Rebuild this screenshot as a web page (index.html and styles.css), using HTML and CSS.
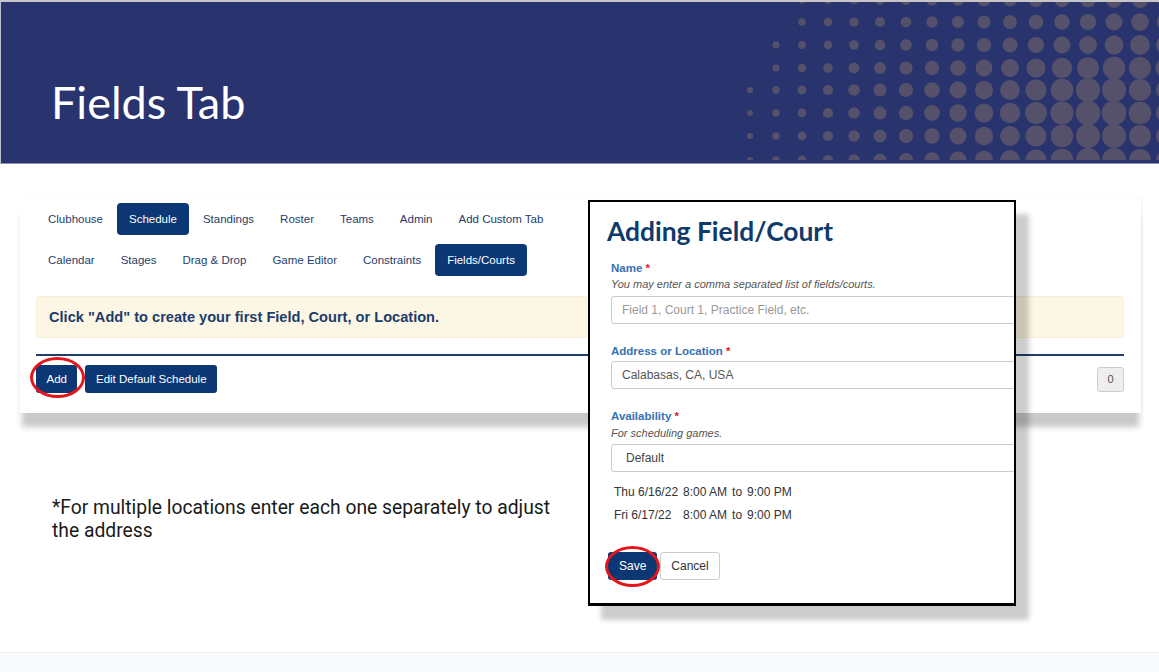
FILE: index.html
```html
<!DOCTYPE html>
<html lang="en">
<head>
<meta charset="utf-8">
<title>Fields Tab</title>
<link rel="stylesheet" href="styles.css">
</head>
<body>
<header class="hero">
  <h1 class="hero-title">Fields Tab</h1>
  <svg class="hero-dots" viewBox="0 0 420 158" width="420" height="158" aria-hidden="true">
    <g fill="#55516b">
      <circle cx="63" cy="-2" r="3.7"/><circle cx="89" cy="-2" r="4"/><circle cx="115" cy="-2" r="4.4"/><circle cx="141" cy="-2" r="4.8"/><circle cx="167" cy="-2" r="5.1"/><circle cx="193" cy="-2" r="5.5"/><circle cx="219" cy="-2" r="5.8"/><circle cx="245" cy="-2" r="6.2"/><circle cx="271" cy="-2" r="6.5"/><circle cx="297" cy="-2" r="6.9"/><circle cx="323" cy="-2" r="7.2"/><circle cx="349" cy="-2" r="7.6"/><circle cx="375" cy="-2" r="7.9"/><circle cx="401" cy="-2" r="8"/><circle cx="427" cy="-2" r="8"/>
      <circle cx="63" cy="20" r="3.8"/><circle cx="89" cy="20" r="4.2"/><circle cx="115" cy="20" r="4.6"/><circle cx="141" cy="20" r="5"/><circle cx="167" cy="20" r="5.3"/><circle cx="193" cy="20" r="5.7"/><circle cx="219" cy="20" r="6.1"/><circle cx="245" cy="20" r="6.5"/><circle cx="271" cy="20" r="6.9"/><circle cx="297" cy="20" r="7.3"/><circle cx="323" cy="20" r="7.7"/><circle cx="349" cy="20" r="8.1"/><circle cx="375" cy="20" r="8.5"/><circle cx="401" cy="20" r="8.8"/><circle cx="427" cy="20" r="9"/>
      <circle cx="37" cy="43" r="3.5"/><circle cx="63" cy="43" r="3.9"/><circle cx="89" cy="43" r="4.4"/><circle cx="115" cy="43" r="4.8"/><circle cx="141" cy="43" r="5.3"/><circle cx="167" cy="43" r="5.8"/><circle cx="193" cy="43" r="6.2"/><circle cx="219" cy="43" r="6.7"/><circle cx="245" cy="43" r="7.1"/><circle cx="271" cy="43" r="7.6"/><circle cx="297" cy="43" r="8.1"/><circle cx="323" cy="43" r="8.5"/><circle cx="349" cy="43" r="9"/><circle cx="375" cy="43" r="9.4"/><circle cx="401" cy="43" r="9.9"/><circle cx="427" cy="43" r="10"/>
      <circle cx="37" cy="66" r="3.6"/><circle cx="63" cy="66" r="4.2"/><circle cx="89" cy="66" r="4.8"/><circle cx="115" cy="66" r="5.4"/><circle cx="141" cy="66" r="6"/><circle cx="167" cy="66" r="6.6"/><circle cx="193" cy="66" r="7.2"/><circle cx="219" cy="66" r="7.8"/><circle cx="245" cy="66" r="8.4"/><circle cx="271" cy="66" r="9"/><circle cx="297" cy="66" r="9.6"/><circle cx="323" cy="66" r="10.2"/><circle cx="349" cy="66" r="10.8"/><circle cx="375" cy="66" r="11.2"/><circle cx="401" cy="66" r="11"/><circle cx="427" cy="66" r="10.5"/>
      <circle cx="11" cy="88" r="3"/><circle cx="37" cy="88" r="3.7"/><circle cx="63" cy="88" r="4.4"/><circle cx="89" cy="88" r="5.1"/><circle cx="115" cy="88" r="5.8"/><circle cx="141" cy="88" r="6.5"/><circle cx="167" cy="88" r="7.1"/><circle cx="193" cy="88" r="7.8"/><circle cx="219" cy="88" r="8.5"/><circle cx="245" cy="88" r="9.2"/><circle cx="271" cy="88" r="9.9"/><circle cx="297" cy="88" r="10.6"/><circle cx="323" cy="88" r="11.3"/><circle cx="349" cy="88" r="12"/><circle cx="375" cy="88" r="12"/><circle cx="401" cy="88" r="11"/><circle cx="427" cy="88" r="10"/>
      <circle cx="11" cy="111" r="3"/><circle cx="37" cy="111" r="3.7"/><circle cx="63" cy="111" r="4.4"/><circle cx="89" cy="111" r="5.1"/><circle cx="115" cy="111" r="5.8"/><circle cx="141" cy="111" r="6.5"/><circle cx="167" cy="111" r="7.2"/><circle cx="193" cy="111" r="7.9"/><circle cx="219" cy="111" r="8.7"/><circle cx="245" cy="111" r="9.4"/><circle cx="271" cy="111" r="10.2"/><circle cx="297" cy="111" r="10.9"/><circle cx="323" cy="111" r="11.6"/><circle cx="349" cy="111" r="12.3"/><circle cx="375" cy="111" r="12.3"/><circle cx="401" cy="111" r="11.3"/><circle cx="427" cy="111" r="10"/>
      <circle cx="11" cy="134" r="3"/><circle cx="37" cy="134" r="3.7"/><circle cx="63" cy="134" r="4.4"/><circle cx="89" cy="134" r="5.1"/><circle cx="115" cy="134" r="5.8"/><circle cx="141" cy="134" r="6.5"/><circle cx="167" cy="134" r="7.1"/><circle cx="193" cy="134" r="7.8"/><circle cx="219" cy="134" r="8.5"/><circle cx="245" cy="134" r="9.2"/><circle cx="271" cy="134" r="9.9"/><circle cx="297" cy="134" r="10.6"/><circle cx="323" cy="134" r="11.3"/><circle cx="349" cy="134" r="12"/><circle cx="375" cy="134" r="12"/><circle cx="401" cy="134" r="11"/><circle cx="427" cy="134" r="10"/>
      <circle cx="11" cy="158" r="3"/><circle cx="37" cy="158" r="3.7"/><circle cx="63" cy="158" r="4.4"/><circle cx="89" cy="158" r="5.1"/><circle cx="115" cy="158" r="5.8"/><circle cx="141" cy="158" r="6.5"/><circle cx="167" cy="158" r="7.1"/><circle cx="193" cy="158" r="7.8"/><circle cx="219" cy="158" r="8.5"/><circle cx="245" cy="158" r="9.2"/><circle cx="271" cy="158" r="9.9"/><circle cx="297" cy="158" r="10.6"/><circle cx="323" cy="158" r="11.3"/><circle cx="349" cy="158" r="12"/><circle cx="375" cy="158" r="12"/><circle cx="401" cy="158" r="11"/><circle cx="427" cy="158" r="10"/>
    </g>
  </svg>
</header>

<main class="stage">
  <section class="card">
    <nav class="tabs">
      <ul class="tab-row">
        <li class="tab">Clubhouse</li>
        <li class="tab active">Schedule</li>
        <li class="tab">Standings</li>
        <li class="tab">Roster</li>
        <li class="tab">Teams</li>
        <li class="tab">Admin</li>
        <li class="tab">Add Custom Tab</li>
      </ul>
      <ul class="tab-row">
        <li class="tab">Calendar</li>
        <li class="tab">Stages</li>
        <li class="tab">Drag &amp; Drop</li>
        <li class="tab">Game Editor</li>
        <li class="tab">Constraints</li>
        <li class="tab active">Fields/Courts</li>
      </ul>
    </nav>
    <div class="alert">Click "Add" to create your first Field, Court, or Location.</div>
    <div class="rule"></div>
    <div class="toolbar">
      <div class="btn-group">
        <span class="mark">
          <span class="btn primary">Add</span>
          <span class="ring ring-add"></span>
        </span>
        <span class="btn primary">Edit Default Schedule</span>
      </div>
      <span class="count">0</span>
    </div>
  </section>

  <p class="note">*For multiple locations enter each one separately to adjust the address</p>

  <div class="dialog">
    <h2 class="dialog-title">Adding Field/Court</h2>
    <div class="group g-name">
      <div class="lbl">Name <span class="req">*</span></div>
      <div class="hint">You may enter a comma separated list of fields/courts.</div>
      <div class="input placeholder">Field 1, Court 1, Practice Field, etc.</div>
    </div>
    <div class="group g-addr">
      <div class="lbl">Address or Location <span class="req">*</span></div>
      <div class="input">Calabasas, CA, USA</div>
    </div>
    <div class="group g-avail">
      <div class="lbl">Availability <span class="req">*</span></div>
      <div class="hint">For scheduling games.</div>
      <div class="input select">Default</div>
    </div>
    <div class="slots">
      <span>Thu 6/16/22</span><span>8:00 AM</span><span>to</span><span>9:00 PM</span>
      <span>Fri 6/17/22</span><span>8:00 AM</span><span>to</span><span>9:00 PM</span>
    </div>
    <div class="actions">
      <span class="mark">
        <span class="btn primary save">Save</span>
        <span class="ring ring-save"></span>
      </span>
      <span class="btn ghost">Cancel</span>
    </div>
  </div>
</main>

<footer class="foot"></footer>
</body>
</html>
```

FILE: styles.css
```css
* { box-sizing: border-box; }

html, body {
  margin: 0;
  padding: 0;
}

body {
  width: 1159px;
  height: 672px;
  display: flex;
  flex-direction: column;
  background: #ffffff;
  font-family: "Liberation Sans", Arial, sans-serif;
  overflow: hidden;
}

/* ---------- header banner ---------- */
.hero {
  flex: 0 0 164px;
  display: flex;
  justify-content: space-between;
  align-items: flex-start;
  background: #29346f;
  border-top: 2px solid #c6c6c9;
  border-left: 1px solid #b9bccb;
  border-bottom: 1px solid #8d93b4;
  overflow: hidden;
}

.hero-title {
  margin: 0;
  padding: 73px 0 0 50px;
  font: 400 45px/54px Lato, sans-serif;
  color: #ffffff;
}

.hero-dots {
  display: block;
  flex: 0 0 420px;
  width: 420px;
  height: 158px;
}

/* ---------- stage ---------- */
.stage {
  flex: 1 1 auto;
  position: relative;
  padding-top: 34px;
}

.card {
  margin: 0 18px 0 20px;
  background: #ffffff;
  padding: 5px 17px 20px 16px;
  box-shadow: 0 16px 6px -2px #c9c9c9, 1px 0 2px rgba(0, 0, 0, 0.06);
}

.tab-row {
  display: flex;
  gap: 2px;
  list-style: none;
  margin: 0;
  padding: 0;
}

.tab-row + .tab-row { margin-top: 9px; }

.tab {
  padding: 9px 12px;
  font-size: 11.5px;
  line-height: 14px;
  color: #1f3d6b;
  border-radius: 4px;
}

.tab.active {
  background: #0b3875;
  color: #ffffff;
}

.alert {
  margin-top: 20px;
  height: 42px;
  display: flex;
  align-items: center;
  padding: 0 12px;
  background: #fcf7e4;
  border: 1px solid #f6eed6;
  border-radius: 4px;
  font: 700 14.6px/16px "Liberation Sans", Arial, sans-serif;
  color: #1d3c6d;
}

.rule {
  margin-top: 16px;
  height: 2px;
  background: #1f3e6c;
}

.toolbar {
  margin-top: 9px;
  display: flex;
  justify-content: space-between;
  align-items: center;
}

.btn-group {
  display: flex;
  gap: 8px;
}

.mark {
  position: relative;
  display: inline-flex;
}

.btn {
  display: inline-flex;
  align-items: center;
  height: 28px;
  padding: 0 10.5px;
  font-size: 11.5px;
  border-radius: 3px;
  white-space: nowrap;
}

.btn.primary {
  background: #0b3875;
  color: #ffffff;
}

.btn.ghost {
  background: #ffffff;
  color: #333333;
  border: 1px solid #cccccc;
  font-size: 12px;
  padding: 0 10px;
}

.btn.save {
  font-size: 12px;
  padding: 0 11px;
}

.ring {
  position: absolute;
  width: 55px;
  height: 41px;
  border: 3px solid #e3161c;
  border-radius: 50%;
  pointer-events: none;
}

.ring-add { left: -6px; top: -8px; }
.ring-save { left: -3px; top: -6px; }

.count {
  width: 27px;
  height: 25px;
  display: flex;
  align-items: center;
  justify-content: center;
  background: #eeeeee;
  border: 1px solid #cccccc;
  border-radius: 3px;
  font-size: 11px;
  color: #555555;
}

.note {
  margin: 83px 0 0 52px;
  width: 515px;
  font: 400 19.3px/23px Roboto, sans-serif;
  color: #1a1a1a;
}

/* ---------- dialog overlay ---------- */
.dialog {
  position: absolute;
  left: 588px;
  top: 36px;
  width: 428px;
  height: 406px;
  background: #ffffff;
  border: 2px solid #000000;
  border-bottom-width: 3px;
  box-shadow: 13px 14px 5px rgba(0, 0, 0, 0.2);
  overflow: hidden;
  padding: 0 0 0 17px;
}

.dialog-title {
  margin: 13px 0 0;
  font: 700 26.4px/32px Lato, sans-serif;
  color: #0f3a6c;
  white-space: nowrap;
}

.group { padding-left: 4px; }

.lbl {
  font-weight: 700;
  font-size: 11.5px;
  line-height: 14px;
  color: #3671b4;
}

.req { color: #e0201b; }

.hint {
  margin-top: 2px;
  font-style: italic;
  font-size: 11px;
  line-height: 14px;
  color: #555555;
}

.input {
  width: 440px;
  height: 28px;
  display: flex;
  align-items: center;
  padding: 0 10px;
  border: 1px solid #cccccc;
  border-radius: 3px;
  font-size: 12px;
  color: #555555;
  white-space: nowrap;
}

.input.placeholder { color: #999999; }
.input.select { padding-left: 14px; color: #444444; }

.g-name .lbl { margin-top: 14px; }
.g-name .input { margin-top: 5px; }

.g-addr .lbl { margin-top: 20px; }
.g-addr .input { margin-top: 3px; }

.g-avail .lbl { margin-top: 20px; }
.g-avail .hint { margin-top: 3px; }
.g-avail .input { margin-top: 4px; }

.slots {
  margin: 12px 0 0 7px;
  display: grid;
  grid-template-columns: auto auto auto auto;
  justify-content: start;
  column-gap: 5px;
  row-gap: 7px;
  font-size: 12px;
  line-height: 16px;
  color: #333333;
}

.actions {
  margin: 29px 0 0 1px;
  display: flex;
  gap: 3px;
}

/* ---------- footer strip ---------- */
.foot {
  flex: 0 0 20px;
  background: #f8f9fb;
  border-top: 1px solid #eef0f3;
}
```
